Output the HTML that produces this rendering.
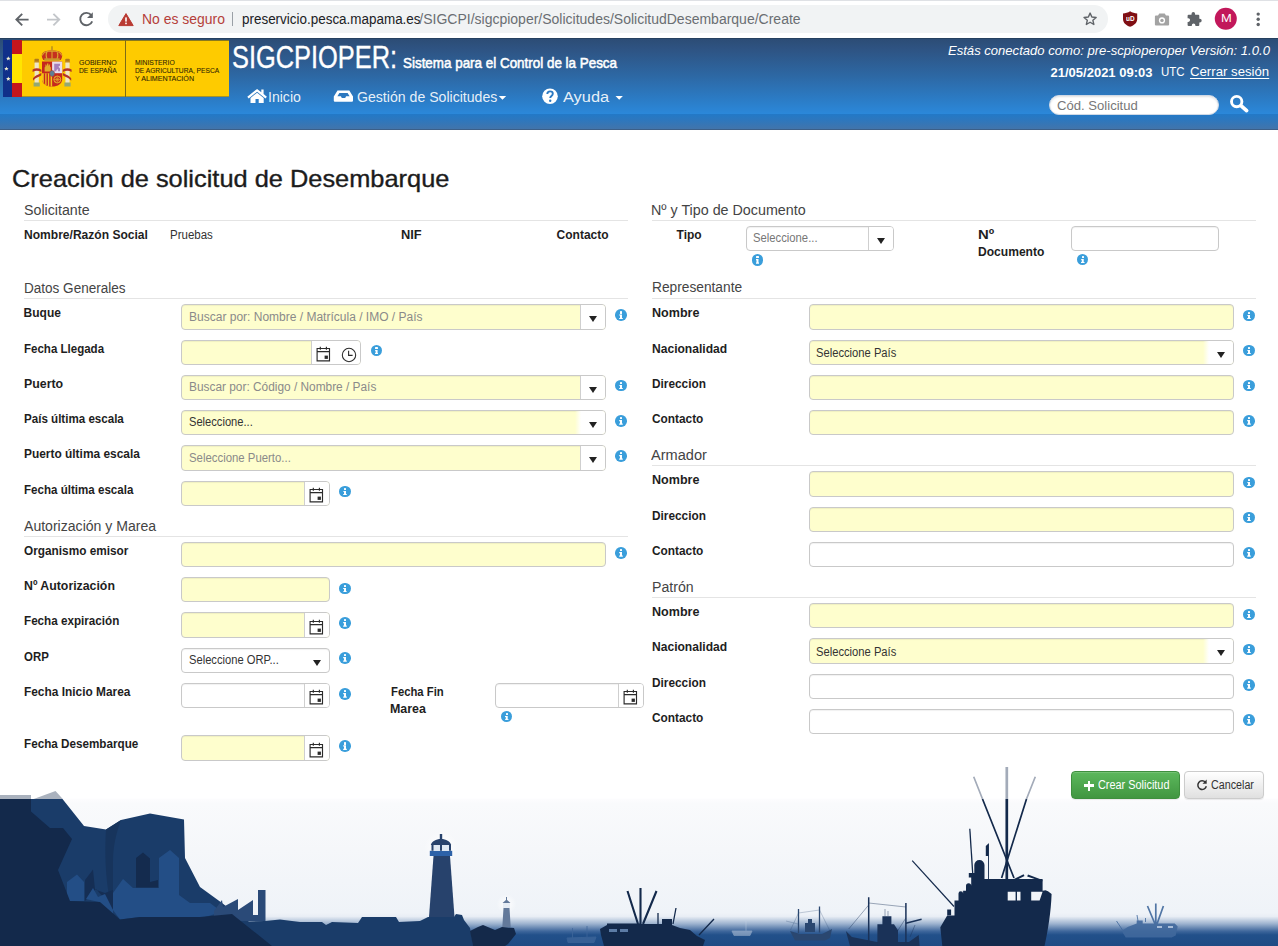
<!DOCTYPE html>
<html lang="es">
<head>
<meta charset="utf-8">
<title>SIGCPIOPER - Creación de solicitud de Desembarque</title>
<style>
html,body{margin:0;padding:0;}
body{width:1278px;height:946px;position:relative;overflow:hidden;background:#fff;font-family:"Liberation Sans",sans-serif;color:#333;}
.t{position:absolute;white-space:nowrap;line-height:1;transform-origin:0 50%;display:block;}
.abs,.abs *{position:absolute;box-sizing:border-box;}
.abs{left:0;top:0;}
svg{position:absolute;overflow:visible;}
/* form controls */
.in{border:1px solid #c9c9c9;border-radius:4px;background:#fff;box-shadow:inset 0 1px 1px rgba(0,0,0,.06);}
.y{background:#fefecd;}
.dv{width:1px;background:#cfcfcf;}
.wh{background:#fff;}
.ar{width:0;height:0;border-left:4px solid transparent;border-right:4px solid transparent;border-top:6px solid #222;}
.hr{height:1px;background:#e4e4e4;}
.i{width:11.6px;height:11.6px;border-radius:50%;background:#3a9edb;}
.i:before{content:"";position:absolute;left:4.9px;top:2.2px;width:2.2px;height:2.1px;background:#fff;border-radius:.6px;}
.i:after{content:"";position:absolute;left:4.2px;top:5.1px;width:3.6px;height:4.6px;background:#fff;clip-path:polygon(0 0,78% 0,78% 76%,100% 76%,100% 100%,0 100%,0 76%,22% 76%,22% 24%,0 24%);}
</style>
</head>
<body>
<svg id="footer" style="left:0;top:0" width="1278" height="946" viewBox="0 0 1278 946">
  <linearGradient id="sky" x1="0" y1="798" x2="0" y2="946" gradientUnits="userSpaceOnUse">
    <stop offset="0" stop-color="#fdfdfe"/><stop offset=".04" stop-color="#f9fafc"/><stop offset=".35" stop-color="#f5f7fa"/><stop offset=".775" stop-color="#eff3f8"/>
    <stop offset=".8" stop-color="#e9eef5"/><stop offset=".85" stop-color="#9db3cf"/><stop offset=".9" stop-color="#3f679c"/><stop offset=".925" stop-color="#22508a"/><stop offset="1" stop-color="#1f4b84"/>
  </linearGradient>
  <radialGradient id="glow"><stop offset="0" stop-color="#fff" stop-opacity=".95"/><stop offset="1" stop-color="#fff" stop-opacity="0"/></radialGradient>
  <rect x="0" y="798.700" width="1278" height="148" fill="url(#sky)"/>
  <!-- semi-transparent tops above the strip -->
  <path d="M0 795h31v4.500H0zM33 799.300l22.500-8.300 7.500 8.300z" fill="#8e98a8" opacity=".75"/>
  <!-- distant faint boats -->
  <g fill="#3f679b" stroke="#3f679b" stroke-width="1" opacity=".75">
    <path d="M567 938l1 4.500h26l2-5.500z"/><path d="M572.500 928v11M587 926v12" fill="none"/>
    <path d="M182 922v14M175 936h16l-2 3h-12z"/>
  </g>
  <g fill="#c8d4e4" stroke="#c8d4e4" stroke-width=".8" opacity=".5"><path d="M732 931h20l-2 4.500h-16z"/><path d="M746 921v11" fill="none"/></g>
  <!-- mid cliff -->
  <path d="M31 799H62.500L84 826L106 829.500L121 820L150 813.500L184 819.500L185 858L200 887L222 903L240 917L249 921.500L265 921L280 919.500L300 922L322 922L326 925L332 922L358 923L362 917L396 917L399 922L420 921L428 917L454 917L456 914L462 915L464 920L470 928L473 946H0V799z" fill="#1a3c69"/>
  <path d="M106 829.500L121 820C116 833 113 847 113 862V910L110 900C105.500 880 104.500 852 106 829.500z" fill="#17345c"/>
  <!-- houses / lighter areas -->
  <path d="M67 882l10-7.500 7 7.500v19H67z" fill="#234e86"/>
  <path d="M113 893l10-14 10 9h26v-30l11-8 9 8v37l11 8h20l12 9-17 5h-65l-20 2.500-7-9.500z" fill="#234e86"/>
  <path d="M136 858l7-5.500 7 6v23.500l8-2v7.500h-22z" fill="#142b4e"/>
  <path d="M85 880l8-10.500 2 20 10 3.500 8-3v20l-9-12-8-9-11 12z" fill="#152e54"/>
  <path d="M86 899l7-11 5 9 7-3 8 16v6l-14-14z" fill="#234e86"/>
  <!-- factory -->
  <path d="M214 911l8-11 1 7 15-8v11l15-10v15h5v-25h7.500v31H214z" fill="#2a4a78"/>
  <!-- foreground cliff -->
  <path d="M0 799h31v12.500L50 828h13l9 11-14 31 12 31 30 1 20 17.500 20-2.500h60l32-3 40 32H0z" fill="#13294b"/>
  <!-- rocks -->
  <path d="M470 931l8-4 5-2 12 5 7-3 12 1 2 6-8 10-3 2h-32z" fill="#14294a"/>
  <!-- lighthouse 1 -->
  <circle cx="441" cy="848" r="17" fill="url(#glow)"/>
  <path d="M433.500 856h16.500l4.500 61h-25.500z" fill="#27426c"/>
  <rect x="429.800" y="850.800" width="22.400" height="5.200" fill="#2d62a8"/>
  <rect x="431.500" y="844.800" width="19.500" height="6.200" fill="#dfe8f3"/>
  <path d="M431.500 844.800h2v6h-2zM440 844.800h2v6h-2zM449 844.800h2v6h-2z" fill="#27426c"/>
  <path d="M430.800 845c1-3.500 5-6 10.200-6s9.200 2.500 10.200 6zM439.800 834h2.400v6h-2.400z" fill="#27426c"/>
  <!-- lighthouse 2 -->
  <circle cx="506.500" cy="904" r="10" fill="url(#glow)"/>
  <path d="M503.500 908h6l1.200 19h-8.400z" fill="#63799a"/>
  <rect x="503" y="902.500" width="7" height="5.500" fill="#e6ecf4"/><path d="M502.500 903l4-3.500 4 3.500zM506 897h1v4h-1z" fill="#63799a"/>
  <!-- boat A -->
  <g fill="#13294b" stroke="#13294b">
    <path d="M600 929l7-4v-1.500h33v.5h22v-5h10v6l8 3 10 2 7 6 8 4-2 6H604l-3-11z" stroke="none"/>
    <path d="M640.500 888v36M627.500 891l10.500 33M656.500 891l-13.500 33" stroke-width="2.100" fill="none"/>
    <path d="M658 913v11M676 908l-3 16M714 919l-15 16" stroke-width="1.300" fill="none"/>
  </g>
  <path d="M609 929h8v3h-8zM620 929h8v3h-8z" fill="#5d7ca6"/>
  <!-- boat B -->
  <g fill="#2a4770" stroke="#2a4770">
    <path d="M790 931l10 3h22l10-5-2 9-5 2.500h-30z" stroke="none"/>
    <path d="M805 932v-9h3v-4h4v4h3v9z" stroke="none"/>
    <path d="M798.500 909v24M819.500 906.500v26" stroke-width="1.300" fill="none"/>
    <path d="M798.500 913l21-3M798.500 913l-8 17M819.500 910l10 20M786 921l12 3" stroke-width=".6" fill="none" opacity=".45"/>
  </g>
  <!-- boat C -->
  <g fill="#1a3258" stroke="#1a3258">
    <path d="M845.900 931l6 6 25 5h32l9.800-7 .9 11H850z" stroke="none"/>
    <path d="M877.400 946v-21.800h5v-8h9v8h2.600l4 6v15.800z" stroke="none"/>
    <path d="M868.700 897.300V946M905.900 903v40" stroke-width="1.500" fill="none"/>
    <path d="M905.900 923.200l15.700-3.900" stroke-width="1.400" fill="none"/>
    <path d="M868.700 903l37.200 4M868.700 905l-20 24M905.900 918l-9 14M915 925l-5 12M885 916v-7M888 916v-5" stroke-width=".7" fill="none" opacity=".6"/>
  </g>
  <!-- big ship -->
  <g fill="#13294b" stroke="#13294b">
    <path d="M942.300 946L940.300 927.200L947.200 915.400H954.500V900.600H958.500V893.500a2.300 2.300 0 0 1 4.600 0V890.800H966V885.800a2.600 2.600 0 0 1 5.200 0V877.500H968.800V873H974.300V865a5.100 5.100 0 0 1 10.200 0V879H1014L1023.600 874.200L1024.500 876L1018.500 879H1042.600V890.800L1045.500 890.300L1048 891.200L1051.600 894C1051 912 1048 930 1044.500 946z" stroke="none"/>
    <path d="M1028 874.500l14.500 5.500-.3 1.500-15-5z" stroke="none"/>
    <path d="M947.200 909.500h3.900v5.800h-3.900z" stroke="none"/>
    <path d="M1006.800 799v80" stroke-width="2.700" fill="none"/>
    <path d="M982.500 799l31.500 79M1026.500 799l-24.900 79" stroke-width="1.700" fill="none"/>
    <path d="M969.800 828.800l2.900 44.200" stroke-width="1.300" fill="none"/>
    <path d="M988.500 843.600v35.400" stroke-width=".9" fill="none"/>
    <path d="M985.800 846l2.700-2.400v12.400h-2.700z" stroke="none"/>
    <path d="M912.200 860.700l41.800 45.800" stroke-width="1.200" fill="none"/>
  </g>
  <g stroke="#a3abb9" fill="none">
    <path d="M1006.800 767v32" stroke-width="2.700"/><path d="M973.700 776.700l8.800 22.300M1035.300 776.700l-8.800 22.300" stroke-width="1.700"/>
  </g>
  <path d="M1007.700 891.800h7.900v8.800h-7.900zM1017 891.800h3.500v8.800h-3.500zM1031.200 891.800h11.400l-3 8.800h-8.400z" fill="#f1f4f8"/>
  <!-- faint boat D -->
  <g fill="#41699d" stroke="#41699d" opacity=".9">
    <path d="M1121.700 931l6-4 9-3.500v-3h6v3h32l3 3-2 9-4 2h-46z" stroke="none"/>
    <path d="M1155.800 903.500v21M1147.500 906l7.500 18M1163.400 906l-6.400 18" stroke-width="1.700" fill="none"/>
    <path d="M1116.500 921l6 9M1137 915l1 6M1145.500 918v4" stroke-width=".9" fill="none"/>
  </g>
  <path d="M1157 926h5v2h-5zM1168 926h5v2h-5z" fill="#a9bdd8"/>
</svg>

<div class="abs" id="chrome" style="width:1278px;height:38px;background:#fff;">
  <div style="left:0;top:0;width:1278px;height:1px;background:#dfe1e5;"></div>
  <div style="left:108px;top:5px;width:1000px;height:28px;border-radius:14px;background:#f1f3f4;"></div>
  <div style="left:232px;top:12px;width:1px;height:14px;background:#9aa0a6;"></div>
  <svg style="left:0;top:0" width="1278" height="38" viewBox="0 0 1278 38">
    <!-- back -->
    <path d="M28.6 19.6H16.6M22.2 13.9L16.4 19.6L22.2 25.4" fill="none" stroke="#5f6368" stroke-width="1.9"/>
    <!-- forward -->
    <path d="M47 19.6H59M53.4 13.9L59.2 19.6L53.4 25.4" fill="none" stroke="#c3c6ca" stroke-width="1.9"/>
    <!-- reload -->
    <path d="M91.3 15.2A6.2 6.2 0 1 0 92.2 21.4" fill="none" stroke="#5f6368" stroke-width="1.9"/>
    <path d="M92.8 12.2V18H87Z" fill="#5f6368"/>
    <!-- warning -->
    <path d="M126 13.6L133.2 25.6H118.8Z" fill="#b93a32" stroke="#b93a32" stroke-width="1" stroke-linejoin="round"/>
    <rect x="125.2" y="17.4" width="1.6" height="4.2" fill="#fff"/><rect x="125.2" y="22.6" width="1.6" height="1.6" fill="#fff"/>
    <!-- star -->
    <path d="M1090.100 13.100l1.750 3.950 4.300.450-3.250 2.800.950 4.200-3.750-2.250-3.750 2.250.950-4.200-3.250-2.800 4.300-.450z" fill="none" stroke="#5f6368" stroke-width="1.4" stroke-linejoin="round"/>
    <!-- ublock shield -->
    <path d="M1130.1 11.2c2.2 1.4 4.6 2.1 7.1 2.2v5.6c0 3.6-2.8 6.3-7.1 7.8-4.3-1.500-7.100-4.200-7.100-7.800v-5.600c2.500-.1 4.900-.8 7.100-2.200z" fill="#800f14"/>
    <!-- camera -->
    <path d="M1159.300 13.400h5.400l1.300 2h2.100a1 1 0 0 1 1 1v8.100a1 1 0 0 1-1 1h-12.200a1 1 0 0 1-1-1v-8.100a1 1 0 0 1 1-1h2.100z" fill="#a3a3a3"/>
    <circle cx="1162" cy="20.400" r="3.100" fill="#fff"/><circle cx="1162" cy="20.400" r="1.700" fill="#a3a3a3"/>
    <!-- puzzle -->
    <path transform="translate(-1.100 0)" d="M1192.600 13.900a1.800 1.800 0 0 1 3.600 0v.9h3.200a1 1 0 0 1 1 1v2.900h.5a1.900 1.900 0 0 1 0 3.800h-.5v2.400a1 1 0 0 1-1 1h-2.900v-.6a1.800 1.800 0 0 0-3.600 0v.6h-3.200a1 1 0 0 1-1-1v-3h.7a1.800 1.800 0 0 0 0-3.600h-.7v-2.500a1 1 0 0 1 1-1h2.900z" fill="#5f6368"/>
    <!-- avatar -->
    <circle cx="1225.800" cy="18.700" r="11" fill="#c2185b"/>
    <!-- menu dots -->
    <circle cx="1258.200" cy="14.100" r="1.700" fill="#5f6368"/><circle cx="1258.200" cy="19.300" r="1.700" fill="#5f6368"/><circle cx="1258.200" cy="24.500" r="1.700" fill="#5f6368"/>
  </svg>
</div>

<div class="abs" id="header" style="top:38px;width:1278px;height:92px;">
  <div style="left:0;top:0;width:1278px;height:76px;background:linear-gradient(#2c4c74 0,#2e5382 14%,#2d68a4 50%,#2b7fcb 86%,#2b88da 100%);"></div>
  <div style="left:0;top:0;width:1278px;height:1px;background:#26405f;"></div>
  <div style="left:0;top:76px;width:1278px;height:16px;background:linear-gradient(#2279c7 0,#2e77bd 40%,#4474a9 100%);"></div>
  <div style="left:0;top:91px;width:1278px;height:1px;background:#3c5f88;"></div>
  <!-- gov logo -->
  <div style="left:3px;top:2px;width:226px;height:57px;background:#fecb00;border-top:1px solid #8a7a1c;border-bottom:1px solid #a89326;"></div>
  <div style="left:3px;top:2px;width:9px;height:57px;background:#10308a;"></div>
  <div style="left:12px;top:2px;width:10px;height:57px;background:#c4161c;"></div>
  <div style="left:12px;top:16px;width:10px;height:29px;background:#ffe500;"></div>
  <div style="left:125px;top:2px;width:1px;height:57px;background:#7d6c17;"></div>
  <svg style="left:0;top:-38px" width="240" height="130" viewBox="0 0 240 130">
    <g fill="#f4f1d0">
      <path d="M8.300 56.300l.6 1.500 1.600.1-1.200 1 .4 1.600-1.400-.9-1.400.9.400-1.600-1.200-1 1.600-.1z"/>
      <path d="M6.400 66.400l.6 1.500 1.600.1-1.200 1 .4 1.600-1.400-.9-1.400.9.400-1.600-1.200-1 1.600-.1z"/>
      <path d="M8.300 76.600l.6 1.500 1.600.1-1.200 1 .4 1.600-1.400-.9-1.400.9.400-1.600-1.200-1 1.600-.1z"/>
    </g>
    <!-- coat of arms -->
    <g>
      <!-- pillars -->
      <rect x="34.600" y="62" width="4.200" height="21" fill="#efe6c6"/><rect x="65.400" y="62" width="4.200" height="21" fill="#efe6c6"/>
      <rect x="33.600" y="82.500" width="6.200" height="4" fill="#93a873"/><rect x="64.400" y="82.500" width="6.200" height="4" fill="#93a873"/>
      <path d="M34 62.500h5.400l-.7-2.200h-4z" fill="#c28a20"/><path d="M64.800 62.500h5.400l-.7-2.200h-4z" fill="#c28a20"/>
      <rect x="34.400" y="58.700" width="4.600" height="2.200" rx="1" fill="#b07a1c"/><rect x="65.200" y="58.700" width="4.600" height="2.200" rx="1" fill="#b07a1c"/>
      <path d="M32.600 69.500c3-1.800 6-1.500 8.800.2v2.400c-2.800-1.700-5.800-2-8.800-.2zM33 78.300c2.500-3.500 6-3.600 8.300-5.600v2.500c-2.300 2-5.800 2.100-8.300 5.600z" fill="#b2332b"/>
      <path d="M71.600 69.500c-3-1.800-6-1.500-8.800.2v2.400c2.800-1.700 5.800-2 8.800-.2zM71.200 78.300c-2.500-3.500-6-3.600-8.300-5.600v2.500c2.300 2 5.800 2.100 8.300 5.600z" fill="#b2332b"/>
      <!-- crown -->
      <path d="M52 46.200v3.400" stroke="#a8881c" stroke-width="1.300"/><circle cx="52" cy="49.700" r="1.100" fill="#c9962a"/>
      <path d="M43.300 60C41.200 56.500 41 53 44.800 51.500C48 50.300 56 50.300 59.200 51.500C63 53 62.800 56.500 60.700 60z" fill="#c5301f"/>
      <path d="M42.300 55.500C43 52.500 47 51 52 51S61 52.500 61.700 55.500M52 51v8M47 51.600C45.800 54 46 57 47 59.400M57 51.600C58.200 54 58 57 57 59.400" fill="none" stroke="#dca62c" stroke-width="1.100"/>
      <rect x="44.300" y="58.300" width="15.400" height="2.500" fill="#c9962a"/>
      <!-- shield -->
      <path d="M42 61.600h20.200v17.600c0 4.200-4.400 7.400-10.100 7.400s-10.100-3.200-10.100-7.400z" fill="#c5281e"/>
      <rect x="52.100" y="61.600" width="10.100" height="11.600" fill="#e9ddea"/>
      <path d="M54.200 63.800h5.800v1.800l-1.600 1.200 1.600 1.600v2.800h-1.900v-2.200l-1.700 1v1.200h-2.200z" fill="#a67fbd"/>
      <path d="M42 73.200h10.100v13.300c-5.600 0-10.100-3.200-10.100-7.300z" fill="#f2c21c"/>
      <path d="M43.800 73.200h1.400v11.300l-1.400-1.200zM46.500 73.200h1.400v12.500l-1.400-.5zM49.200 73.200h1.400v13.200l-1.400-.2z" fill="#c5281e"/>
      <path d="M44.600 71.600v-4.200l.8-.8v-2h.9v.9h.7v-2h1.400v2h.7v-.9h.9v2l.8.800v4.200z" fill="#e2b02b"/>
      <circle cx="57.300" cy="79.500" r="3.500" fill="none" stroke="#e3a72c" stroke-width="1"/><path d="M53.800 79.500h7M57.300 76v7M54.800 77l5 5M59.800 77l-5 5" stroke="#e3a72c" stroke-width=".7"/>
      <ellipse cx="52.100" cy="73.400" rx="2.500" ry="3" fill="#5d7f95" stroke="#b23a2b" stroke-width=".5"/>
    </g>
  </svg>
  <div style="left:1049.200px;top:57px;width:170px;height:20.400px;border-radius:10.200px;background:#fff;border:1px solid #cfd9e6;box-shadow:inset 0 1px 2px rgba(0,0,0,.12)"></div>
  <svg style="left:0;top:-38px" width="1278" height="130" viewBox="0 0 1278 130">
    <g fill="#fff">
      <!-- home -->
      <path d="M257.100 88.900l-9.800 7.800 1.400 1.700 8.400-6.700 8.400 6.700 1.400-1.700-3.300-2.600v-4.600h-2.300v2.700z"/>
      <path d="M257.100 92.700l-6.600 5.300v5h5v-3.900h3.200v3.900h5v-5z"/>
      <!-- inbox -->
      <path d="M337.500 90.500h11.800l3.700 6v4.200a1.100 1.100 0 0 1-1.100 1.100h-17a1.100 1.100 0 0 1-1.100-1.100v-4.200zM339.400 93l-2 3.200h3.500l.9 1.800h3.400l.9-1.800h3.500l-2-3.200z" fill-rule="evenodd"/>
      <!-- help -->
      <circle cx="550" cy="96.200" r="7.800"/>
      <!-- carets -->
      <path d="M498.800 96h7.400l-3.700 3.800zM615.500 96h7.400l-3.700 3.800z"/>
    </g>
    <path d="M547.300 94.100c0-1.700 1.200-2.700 2.800-2.700s2.700 1 2.700 2.300c0 2.200-2.600 2.200-2.600 4.200" fill="none" stroke="#2b79c2" stroke-width="1.900"/><circle cx="550.200" cy="100.700" r="1.200" fill="#2b79c2"/>
    <!-- search icon -->
    <circle cx="1236.700" cy="101.600" r="5.200" fill="none" stroke="#fff" stroke-width="2.900"/><path d="M1241.200 105.900l5.400 4.700" stroke="#fff" stroke-width="3.800" stroke-linecap="round"/>
  </svg>
</div>
<div class="abs" id="form">
<div class="hr" style="left:24px;top:220px;width:604px"></div>
<div class="hr" style="left:24px;top:298px;width:604px"></div>
<div class="hr" style="left:24px;top:536px;width:604px"></div>
<div class="hr" style="left:652px;top:220px;width:604px"></div>
<div class="hr" style="left:652px;top:298px;width:604px"></div>
<div class="hr" style="left:652px;top:465px;width:604px"></div>
<div class="hr" style="left:652px;top:597px;width:604px"></div>
<div class="in y" style="left:181px;top:304px;width:425.00px;height:26.00px"><div class="wh" style="left:398.00px;top:0;width:25.00px;height:24.00px;border-radius:0 3px 3px 0;border-left:1px solid #cfcfcf"></div></div>
<div class="ar" style="left:589.20px;top:316.15px"></div>
<div class="in y" style="left:181px;top:340px;width:180.00px;height:25.00px"><div class="wh" style="left:129.00px;top:0;width:49.00px;height:23.00px;border-radius:0 3px 3px 0;border-left:1px solid #cfcfcf"></div></div>
<svg class="cal" style="left:315.90px;top:346.30px" width="15" height="16" viewBox="0 0 15 16"><path d="M1.1 2.500h12.400v12.300H1.100zM1.100 5.600h12.400M4.300 .800v3M10.400 .800v3" fill="none" stroke="#2b2b2b" stroke-width="1.150"/><rect x="8.600" y="9.600" width="3.300" height="3.300" fill="#2b2b2b"/></svg>
<svg style="left:340.60px;top:346.90px" width="16" height="16" viewBox="0 0 16 16"><circle cx="8" cy="8" r="6.700" fill="none" stroke="#2b2b2b" stroke-width="1.050"/><path d="M7.600 3.800v4.600h4" fill="none" stroke="#2b2b2b" stroke-width="1.100"/></svg>
<div class="in y" style="left:181px;top:375px;width:425.00px;height:25.00px"><div class="wh" style="left:398.00px;top:0;width:25.00px;height:23.00px;border-radius:0 3px 3px 0;border-left:1px solid #cfcfcf"></div></div>
<div class="ar" style="left:589.20px;top:386.65px"></div>
<div class="in y" style="left:181px;top:410px;width:425.00px;height:25.00px"><div style="left:393.00px;top:0;width:30.00px;height:23.00px;border-radius:0 3px 3px 0;background:linear-gradient(90deg,rgba(255,255,255,0) 0,#fff 6px)"></div></div>
<div class="ar" style="left:589.30px;top:421.85px"></div>
<div class="in y" style="left:181px;top:445px;width:425.00px;height:26.00px"><div class="wh" style="left:398.00px;top:0;width:25.00px;height:24.00px;border-radius:0 3px 3px 0;border-left:1px solid #cfcfcf"></div></div>
<div class="ar" style="left:589.20px;top:457.15px"></div>
<div class="in y" style="left:181px;top:481px;width:149.00px;height:25.00px"><div class="wh" style="left:122.00px;top:0;width:25.00px;height:23.00px;border-radius:0 3px 3px 0;border-left:1px solid #cfcfcf"></div></div>
<svg class="cal" style="left:308.90px;top:487.30px" width="15" height="16" viewBox="0 0 15 16"><path d="M1.1 2.500h12.400v12.300H1.100zM1.100 5.600h12.400M4.300 .800v3M10.400 .800v3" fill="none" stroke="#2b2b2b" stroke-width="1.150"/><rect x="8.600" y="9.600" width="3.300" height="3.300" fill="#2b2b2b"/></svg>
<div class="in y" style="left:181px;top:542px;width:425.00px;height:25.00px"></div>
<div class="in y" style="left:181px;top:577px;width:149.00px;height:25.00px"></div>
<div class="in y" style="left:181px;top:612px;width:149.00px;height:26.00px"><div class="wh" style="left:122.00px;top:0;width:25.00px;height:24.00px;border-radius:0 3px 3px 0;border-left:1px solid #cfcfcf"></div></div>
<svg class="cal" style="left:308.90px;top:618.80px" width="15" height="16" viewBox="0 0 15 16"><path d="M1.1 2.500h12.400v12.300H1.100zM1.100 5.600h12.400M4.300 .800v3M10.400 .800v3" fill="none" stroke="#2b2b2b" stroke-width="1.150"/><rect x="8.600" y="9.600" width="3.300" height="3.300" fill="#2b2b2b"/></svg>
<div class="in" style="left:181px;top:648px;width:149.00px;height:25.00px"></div>
<div class="ar" style="left:313.30px;top:659.85px"></div>
<div class="in" style="left:181px;top:683px;width:149.00px;height:25.00px"><div class="wh" style="left:122.00px;top:0;width:25.00px;height:23.00px;border-radius:0 3px 3px 0;border-left:1px solid #cfcfcf"></div></div>
<svg class="cal" style="left:308.90px;top:689.30px" width="15" height="16" viewBox="0 0 15 16"><path d="M1.1 2.500h12.400v12.300H1.100zM1.100 5.600h12.400M4.300 .800v3M10.400 .800v3" fill="none" stroke="#2b2b2b" stroke-width="1.150"/><rect x="8.600" y="9.600" width="3.300" height="3.300" fill="#2b2b2b"/></svg>
<div class="in" style="left:495px;top:683px;width:149.00px;height:25.00px"><div class="wh" style="left:122.00px;top:0;width:25.00px;height:23.00px;border-radius:0 3px 3px 0;border-left:1px solid #cfcfcf"></div></div>
<svg class="cal" style="left:622.90px;top:689.30px" width="15" height="16" viewBox="0 0 15 16"><path d="M1.1 2.500h12.400v12.300H1.100zM1.100 5.600h12.400M4.300 .800v3M10.400 .800v3" fill="none" stroke="#2b2b2b" stroke-width="1.150"/><rect x="8.600" y="9.600" width="3.300" height="3.300" fill="#2b2b2b"/></svg>
<div class="in y" style="left:181px;top:735px;width:149.00px;height:26.00px"><div class="wh" style="left:122.00px;top:0;width:25.00px;height:24.00px;border-radius:0 3px 3px 0;border-left:1px solid #cfcfcf"></div></div>
<svg class="cal" style="left:308.90px;top:741.80px" width="15" height="16" viewBox="0 0 15 16"><path d="M1.1 2.500h12.400v12.300H1.100zM1.100 5.600h12.400M4.300 .800v3M10.400 .800v3" fill="none" stroke="#2b2b2b" stroke-width="1.150"/><rect x="8.600" y="9.600" width="3.300" height="3.300" fill="#2b2b2b"/></svg>
<div class="in" style="left:746px;top:226px;width:148.00px;height:25.00px"><div class="wh" style="left:121.00px;top:0;width:25.00px;height:23.00px;border-radius:0 3px 3px 0;border-left:1px solid #cfcfcf"></div></div>
<div class="ar" style="left:877.20px;top:237.65px"></div>
<div class="in" style="left:1071px;top:226px;width:148.00px;height:25.00px"></div>
<div class="in y" style="left:809px;top:304px;width:425.00px;height:26.00px"></div>
<div class="in y" style="left:809px;top:340px;width:425.00px;height:25.00px"><div style="left:393.00px;top:0;width:30.00px;height:23.00px;border-radius:0 3px 3px 0;background:linear-gradient(90deg,rgba(255,255,255,0) 0,#fff 6px)"></div></div>
<div class="ar" style="left:1217.30px;top:351.85px"></div>
<div class="in y" style="left:809px;top:375px;width:425.00px;height:25.00px"></div>
<div class="in y" style="left:809px;top:410px;width:425.00px;height:25.00px"></div>
<div class="in y" style="left:809px;top:471px;width:425.00px;height:26.00px"></div>
<div class="in y" style="left:809px;top:507px;width:425.00px;height:25.00px"></div>
<div class="in" style="left:809px;top:542px;width:425.00px;height:25.00px"></div>
<div class="in y" style="left:809px;top:603px;width:425.00px;height:25.00px"></div>
<div class="in y" style="left:809px;top:638px;width:425.00px;height:26.00px"><div style="left:393.00px;top:0;width:30.00px;height:24.00px;border-radius:0 3px 3px 0;background:linear-gradient(90deg,rgba(255,255,255,0) 0,#fff 6px)"></div></div>
<div class="ar" style="left:1217.30px;top:650.35px"></div>
<div class="in" style="left:809px;top:674px;width:425.00px;height:25.00px"></div>
<div class="in" style="left:809px;top:709px;width:425.00px;height:25.00px"></div>
<div class="i" style="left:615.00px;top:309.30px"></div>
<div class="i" style="left:370.60px;top:344.50px"></div>
<div class="i" style="left:615.00px;top:379.50px"></div>
<div class="i" style="left:615.00px;top:415.00px"></div>
<div class="i" style="left:615.00px;top:450.00px"></div>
<div class="i" style="left:339.00px;top:485.50px"></div>
<div class="i" style="left:615.00px;top:547.00px"></div>
<div class="i" style="left:339.00px;top:582.75px"></div>
<div class="i" style="left:339.00px;top:617.00px"></div>
<div class="i" style="left:339.00px;top:652.00px"></div>
<div class="i" style="left:339.00px;top:688.00px"></div>
<div class="i" style="left:500.75px;top:710.75px"></div>
<div class="i" style="left:339.00px;top:740.25px"></div>
<div class="i" style="left:751.50px;top:254.00px"></div>
<div class="i" style="left:1076.75px;top:253.50px"></div>
<div class="i" style="left:1243.00px;top:309.50px"></div>
<div class="i" style="left:1243.00px;top:344.50px"></div>
<div class="i" style="left:1243.00px;top:379.50px"></div>
<div class="i" style="left:1243.00px;top:415.00px"></div>
<div class="i" style="left:1243.00px;top:476.50px"></div>
<div class="i" style="left:1243.00px;top:511.50px"></div>
<div class="i" style="left:1243.00px;top:547.00px"></div>
<div class="i" style="left:1243.00px;top:608.50px"></div>
<div class="i" style="left:1243.00px;top:643.50px"></div>
<div class="i" style="left:1243.00px;top:679.00px"></div>
<div class="i" style="left:1243.00px;top:714.00px"></div>
<div style="left:1071px;top:771px;width:109px;height:28px;border-radius:4px;border:1px solid #3e8f3e;background:linear-gradient(#5cb85c,#419641);box-shadow:inset 0 1px 0 rgba(255,255,255,.15),0 1px 1px rgba(0,0,0,.08)"></div>
<div style="left:1084px;top:784.2px;width:10px;height:2.6px;background:#fff"></div><div style="left:1087.700px;top:780.500px;width:2.600px;height:10px;background:#fff"></div>
<div style="left:1184.200px;top:771px;width:79.600px;height:28px;border-radius:4px;border:1px solid #ccc;background:linear-gradient(#fff,#e0e0e0);box-shadow:0 1px 1px rgba(0,0,0,.08)"></div>
<svg style="left:1196px;top:779px" width="12" height="12" viewBox="0 0 12 12"><path d="M9.400 3.300A4.300 4.300 0 1 0 10.300 7.300" fill="none" stroke="#333" stroke-width="1.500"/><path d="M10.700 .600v4.200H6.500z" fill="#333"/></svg>
</div>
<div id="texts">
<span class="t" style="left:141.71222737499426px;top:12.15px;font-size:14px;color:#b5403a;transform:scaleX(0.9955);">No es seguro</span>
<span class="t" style="left:241.92959840541832px;top:12.15px;font-size:14px;color:#202124;transform:scaleX(0.9600);">preservicio.pesca.mapama.es</span>
<span class="t" style="left:419.31088643767316px;top:12.15px;font-size:14px;color:#6a6e72;">/SIGCPI/sigcpioper/Solicitudes/SolicitudDesembarque/Create</span>
<span class="t" style="left:1220.7471662319185px;top:13.49px;font-size:11px;color:#fff;transform:scaleX(1.1762);">M</span>
<span class="t" style="left:1125.7760706680338px;top:16.10px;font-size:6.5px;font-weight:700;color:#fff;transform:scaleX(0.9843);">uD</span>
<span class="t" style="left:78.55419019266915px;top:60.28px;font-size:6.4px;color:#2f2604;transform:scaleX(1.0974);-webkit-text-stroke:0.08px #2f2604;">GOBIERNO</span>
<span class="t" style="left:78.5656994844286px;top:68.18px;font-size:6.4px;color:#2f2604;transform:scaleX(1.0460);-webkit-text-stroke:0.08px #2f2604;">DE ESPAÑA</span>
<span class="t" style="left:134.56156682468995px;top:60.08px;font-size:6.4px;color:#2f2604;transform:scaleX(1.0644);-webkit-text-stroke:0.08px #2f2604;">MINISTERIO</span>
<span class="t" style="left:134.56683957708972px;top:67.98px;font-size:6.4px;color:#2f2604;transform:scaleX(1.0409);-webkit-text-stroke:0.08px #2f2604;">DE AGRICULTURA, PESCA</span>
<span class="t" style="left:134.55070776026506px;top:75.58px;font-size:6.4px;color:#2f2604;transform:scaleX(1.1129);-webkit-text-stroke:0.08px #2f2604;">Y ALIMENTACIÓN</span>
<span class="t" style="left:231.51109539699027px;top:41.76px;font-size:31px;color:#fff;transform:scaleX(0.8193);-webkit-text-stroke:0.35px #fff;">SIGCPIOPER:</span>
<span class="t" style="left:403.28040527208873px;top:55.30px;font-size:15px;color:#fff;transform:scaleX(0.8945);-webkit-text-stroke:0.55px #fff;">Sistema para el Control de la Pesca</span>
<span class="t" style="left:267.5072801866302px;top:89.65px;font-size:14px;color:rgba(255,255,255,.9);transform:scaleX(1.0056);">Inicio</span>
<span class="t" style="left:357.0062725803816px;top:89.65px;font-size:14px;color:rgba(255,255,255,.9);transform:scaleX(1.0076);">Gestión de Solicitudes</span>
<span class="t" style="left:563.1770425605707px;top:89.65px;font-size:14px;color:rgba(255,255,255,.9);transform:scaleX(1.1693);">Ayuda</span>
<span class="t" style="left:947.5428178839446px;top:43.77px;font-size:13.5px;color:#fff;transform:scaleX(0.9676);font-style:italic;">Estás conectado como: pre-scpioperoper Versión: 1.0.0</span>
<span class="t" style="left:1050.5442865320954px;top:65.70px;font-size:13px;font-weight:700;color:#fff;">21/05/2021 09:03</span>
<span class="t" style="left:1160.5979394719898px;top:66.12px;font-size:12.5px;color:#fff;transform:scaleX(0.9190);">UTC</span>
<span class="t" style="left:1189.7380746425931px;top:65.27px;font-size:13.5px;color:#fff;transform:scaleX(0.9776);text-decoration:underline;text-underline-offset:2px;">Cerrar sesión</span>
<span class="t" style="left:1057.2416694453707px;top:98.70px;font-size:13px;color:#777;transform:scaleX(1.0073);">Cód. Solicitud</span>
<span class="t" style="left:11.61122142101847px;top:167.69px;font-size:23.4px;color:#1c1c1c;transform:scaleX(1.0852);-webkit-text-stroke:0.35px #1c1c1c;">Creación de solicitud de Desembarque</span>
<span class="t" style="left:23.502093794034174px;top:202.95px;font-size:14px;color:#444;transform:scaleX(1.0161);">Solicitante</span>
<span class="t" style="left:23.526352673932482px;top:281.45px;font-size:14px;color:#444;transform:scaleX(0.9666);">Datos Generales</span>
<span class="t" style="left:23.507758035881817px;top:518.95px;font-size:14px;color:#444;transform:scaleX(1.0046);">Autorización y Marea</span>
<span class="t" style="left:651.4995723803604px;top:202.95px;font-size:14px;color:#444;transform:scaleX(1.0213);">Nº y Tipo de Documento</span>
<span class="t" style="left:651.5194148530899px;top:280.45px;font-size:14px;color:#444;transform:scaleX(0.9808);">Representante</span>
<span class="t" style="left:651.489558830589px;top:448.45px;font-size:14px;color:#444;transform:scaleX(1.0417);">Armador</span>
<span class="t" style="left:651.5055499495459px;top:580.20px;font-size:14px;color:#444;transform:scaleX(1.0091);">Patrón</span>
<span class="t" style="left:23.578207381370827px;top:229.34px;font-size:12px;font-weight:700;color:#1e1e1e;transform:scaleX(1.0043);">Nombre/Razón Social</span>
<span class="t" style="left:400.8510959571359px;top:229.34px;font-size:12px;font-weight:700;color:#1e1e1e;transform:scaleX(1.0688);">NIF</span>
<span class="t" style="left:556.5809956538917px;top:229.34px;font-size:12px;font-weight:700;color:#1e1e1e;">Contacto</span>
<span class="t" style="left:23.579576657050502px;top:307.34px;font-size:12px;font-weight:700;color:#1e1e1e;">Buque</span>
<span class="t" style="left:23.59662174522837px;top:343.34px;font-size:12px;font-weight:700;color:#1e1e1e;transform:scaleX(0.9604);">Fecha Llegada</span>
<span class="t" style="left:23.567224525308358px;top:378.14px;font-size:12px;font-weight:700;color:#1e1e1e;transform:scaleX(1.0304);">Puerto</span>
<span class="t" style="left:23.594516117175726px;top:413.24px;font-size:12px;font-weight:700;color:#1e1e1e;transform:scaleX(0.9654);">País última escala</span>
<span class="t" style="left:23.58305426406997px;top:448.24px;font-size:12px;font-weight:700;color:#1e1e1e;transform:scaleX(0.9927);">Puerto última escala</span>
<span class="t" style="left:23.59503841711445px;top:483.94px;font-size:12px;font-weight:700;color:#1e1e1e;transform:scaleX(0.9642);">Fecha última escala</span>
<span class="t" style="left:23.586627011144156px;top:544.94px;font-size:12px;font-weight:700;color:#1e1e1e;transform:scaleX(0.9842);">Organismo emisor</span>
<span class="t" style="left:23.56906718636927px;top:580.34px;font-size:12px;font-weight:700;color:#1e1e1e;transform:scaleX(1.0260);">Nº Autorización</span>
<span class="t" style="left:23.591587087096794px;top:615.44px;font-size:12px;font-weight:700;color:#1e1e1e;transform:scaleX(0.9724);">Fecha expiración</span>
<span class="t" style="left:23.599360681939263px;top:650.94px;font-size:12px;font-weight:700;color:#1e1e1e;transform:scaleX(0.9539);">ORP</span>
<span class="t" style="left:23.583942638803716px;top:685.94px;font-size:12px;font-weight:700;color:#1e1e1e;transform:scaleX(0.9906);">Fecha Inicio Marea</span>
<span class="t" style="left:390.50487319400116px;top:685.94px;font-size:12px;font-weight:700;color:#1e1e1e;transform:scaleX(0.9408);">Fecha Fin</span>
<span class="t" style="left:390.46496284620576px;top:702.94px;font-size:12px;font-weight:700;color:#1e1e1e;transform:scaleX(1.0358);">Marea</span>
<span class="t" style="left:23.590899540451574px;top:738.44px;font-size:12px;font-weight:700;color:#1e1e1e;transform:scaleX(0.9740);">Fecha Desembarque</span>
<span class="t" style="left:676.5796349461374px;top:229.14px;font-size:12px;font-weight:700;color:#1e1e1e;">Tipo</span>
<span class="t" style="left:977.9787074684357px;top:229.14px;font-size:12px;font-weight:700;color:#1e1e1e;transform:scaleX(1.2412);">Nº</span>
<span class="t" style="left:978.077530176416px;top:246.14px;font-size:12px;font-weight:700;color:#1e1e1e;transform:scaleX(1.0059);">Documento</span>
<span class="t" style="left:651.5605470415968px;top:307.14px;font-size:12px;font-weight:700;color:#1e1e1e;transform:scaleX(1.0463);">Nombre</span>
<span class="t" style="left:651.5774647887324px;top:343.34px;font-size:12px;font-weight:700;color:#1e1e1e;transform:scaleX(1.0060);">Nacionalidad</span>
<span class="t" style="left:651.5863621441636px;top:378.24px;font-size:12px;font-weight:700;color:#1e1e1e;transform:scaleX(0.9849);">Direccion</span>
<span class="t" style="left:651.585144211774px;top:413.24px;font-size:12px;font-weight:700;color:#1e1e1e;transform:scaleX(0.9878);">Contacto</span>
<span class="t" style="left:651.5605470415968px;top:474.14px;font-size:12px;font-weight:700;color:#1e1e1e;transform:scaleX(1.0463);">Nombre</span>
<span class="t" style="left:651.5863621441636px;top:509.94px;font-size:12px;font-weight:700;color:#1e1e1e;transform:scaleX(0.9849);">Direccion</span>
<span class="t" style="left:651.585144211774px;top:544.94px;font-size:12px;font-weight:700;color:#1e1e1e;transform:scaleX(0.9878);">Contacto</span>
<span class="t" style="left:651.5605470415968px;top:606.14px;font-size:12px;font-weight:700;color:#1e1e1e;transform:scaleX(1.0463);">Nombre</span>
<span class="t" style="left:651.5774647887324px;top:641.14px;font-size:12px;font-weight:700;color:#1e1e1e;transform:scaleX(1.0060);">Nacionalidad</span>
<span class="t" style="left:651.5863621441636px;top:676.94px;font-size:12px;font-weight:700;color:#1e1e1e;transform:scaleX(0.9849);">Direccion</span>
<span class="t" style="left:651.585144211774px;top:712.14px;font-size:12px;font-weight:700;color:#1e1e1e;transform:scaleX(0.9878);">Contacto</span>
<span class="t" style="left:170.0976744521546px;top:228.84px;font-size:12px;transform:scaleX(0.9579);">Pruebas</span>
<span class="t" style="left:189.08095258618368px;top:310.84px;font-size:12px;color:#8a8a8a;">Buscar por: Nombre / Matrícula / IMO / País</span>
<span class="t" style="left:189.08456061980874px;top:381.34px;font-size:12px;color:#8a8a8a;transform:scaleX(0.9891);">Buscar por: Código / Nombre / País</span>
<span class="t" style="left:189.1101798741438px;top:416.09px;font-size:12px;transform:scaleX(0.9281);">Seleccione...</span>
<span class="t" style="left:189.10189104113368px;top:451.84px;font-size:12px;color:#8a8a8a;transform:scaleX(0.9479);">Seleccione Puerto...</span>
<span class="t" style="left:189.10923044575273px;top:654.34px;font-size:12px;transform:scaleX(0.9304);">Seleccione ORP...</span>
<span class="t" style="left:753.3555020326335px;top:232.34px;font-size:12px;color:#777;transform:scaleX(0.9393);">Seleccione...</span>
<span class="t" style="left:816.3581835089894px;top:346.84px;font-size:12px;transform:scaleX(0.9329);">Seleccione País</span>
<span class="t" style="left:816.3581835089894px;top:645.59px;font-size:12px;transform:scaleX(0.9329);">Seleccione País</span>
<span class="t" style="left:1098.4186910448846px;top:779.04px;font-size:12px;color:#fff;transform:scaleX(0.9079);">Crear Solicitud</span>
<span class="t" style="left:1211.324575975992px;top:779.04px;font-size:12px;transform:scaleX(0.8939);">Cancelar</span>
</div>
</body>
</html>
